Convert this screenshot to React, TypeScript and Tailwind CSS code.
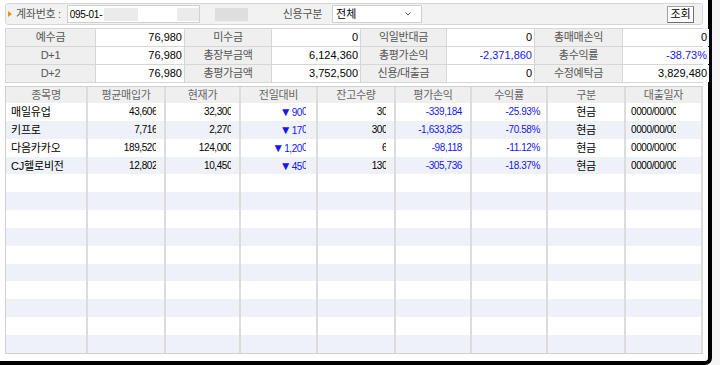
import clsx from 'clsx';

const summary = [
  [
    { label: '예수금', value: '76,980' },
    { label: '미수금', value: '0' },
    { label: '익일반대금', value: '0' },
    { label: '총매매손익', value: '0' },
  ],
  [
    { label: 'D+1', value: '76,980' },
    { label: '총장부금액', value: '6,124,360' },
    { label: '총평가손익', value: '-2,371,860', blue: true },
    { label: '총수익률', value: '-38.73%', blue: true },
  ],
  [
    { label: 'D+2', value: '76,980' },
    { label: '총평가금액', value: '3,752,500' },
    { label: '신용/대출금', value: '0' },
    { label: '수정예탁금', value: '3,829,480' },
  ],
];

const headers = ['종목명', '평균매입가', '현재가', '전일대비', '잔고수량', '평가손익', '수익률', '구분', '대출일자'];

const holdings = [
  { name: '매일유업', avg: '43,606', cur: '32,300', diff: '900', qty: '30', pl: '-339,184', rate: '-25.93%' },
  { name: '키프로', avg: '7,716', cur: '2,270', diff: '170', qty: '300', pl: '-1,633,825', rate: '-70.58%' },
  { name: '다음카카오', avg: '189,520', cur: '124,000', diff: '1,200', qty: '6', pl: '-98,118', rate: '-11.12%' },
  { name: 'CJ헬로비전', avg: '12,802', cur: '10,450', diff: '450', qty: '130', pl: '-305,736', rate: '-18.37%' },
];

const cols = 'grid grid-cols-[82px_78px_75px_77px_78px_76px_76px_78px_77px]';
const cell = 'border-r-2 border-[#dcdcdc] overflow-hidden whitespace-nowrap';

// the original grid cuts off the last glyph of most values
function Clip({ text }: { text: string }) {
  return (
    <>
      {text.slice(0, -1)}
      <span className="inline-block w-[4px] overflow-hidden align-top">{text.slice(-1)}</span>
    </>
  );
}

export default function App() {
  const rows = Array.from({ length: 14 }, (_, i) => holdings[i]);

  return (
    <div className="w-[720px] h-[365px] overflow-hidden bg-[#f4f4f4] font-['Liberation_Sans','Noto_Sans_CJK_KR',sans-serif] text-[11px] text-black">
      <div className="w-[712px] h-[365px] bg-white border-r-4 border-b-4 border-black rounded-br-[7px] pt-[3px] pl-[5px]">
        {/* search bar */}
        <div className="w-[698px] h-[22px] bg-[#f2f2f2] border border-[#d6d6d6] rounded-[3px] flex items-center">
          <svg width="4" height="6" viewBox="0 0 4 6" className="ml-[2px] mr-[4px]">
            <path d="M0 0L4 3L0 6Z" fill="#f0900a" />
          </svg>
          <span className="text-[#555] text-[11px] tracking-[-0.3px]">계좌번호 :</span>
          <div className="ml-[6px] w-[133px] h-[18px] bg-white border border-[#cfcfcf] flex items-center">
            <span className="pl-[2px] text-[10px] tracking-[-0.3px]">095-01-</span>
            <div className="ml-[2px] w-[34px] h-[13px] bg-[#ebebeb]" />
            <div className="ml-auto w-[22px] h-[13px] bg-[#ebebeb]" />
          </div>
          <div className="ml-[15px] w-[33px] h-[13px] bg-[#dedede]" />
          <span className="ml-[35px] text-[#555] tracking-[-0.3px]">신용구분</span>
          <div className="ml-[10px] w-[90px] h-[18px] bg-white border border-[#cfcfcf] flex items-center px-[3px]">
            <span className="text-[11px]">전체</span>
            <svg width="6" height="4" viewBox="0 0 6 4" className="ml-auto mr-[7px]">
              <path d="M0.5 0.5L3 3L5.5 0.5" fill="none" stroke="#555" strokeWidth="1" />
            </svg>
          </div>
          <button className="ml-auto mr-[8px] w-[27px] h-[17px] bg-white border border-[#a0a0a0] border-r-[#707070] border-b-[#707070] text-[11px] leading-none">
            조회
          </button>
        </div>

        {/* summary */}
        <div className="mt-[3px] w-[698px] grid grid-cols-[89px_88px_86px_88px_85px_87px_87px_86px] gap-px bg-[#d6d6d6] border border-[#d6d6d6]">
          {summary.flatMap((row, r) =>
            row.flatMap((c, i) => [
              <div key={`l${r}${i}`} className="h-[17px] bg-[#efefef] text-[#555] text-center leading-[17px] tracking-[-0.3px]">
                {c.label}
              </div>,
              <div
                key={`v${r}${i}`}
                className={clsx('h-[17px] bg-white text-right pr-[2px] leading-[17px]', c.blue && 'text-[#1515f0]')}
              >
                {c.value}
              </div>,
            ])
          )}
        </div>

        {/* holdings */}
        <div className="mt-[3px] w-[698px] border border-[#d0d0d0] border-r-0">
          <div className={clsx(cols, 'h-[16px] bg-[#efefef] text-[#666] text-center leading-[16px] tracking-[-0.3px]')}>
            {headers.map((h) => (
              <div key={h} className={cell}>
                {h}
              </div>
            ))}
          </div>
          {rows.map((h, i) => (
            <div key={i} className={clsx(cols, 'h-[17.85px] leading-[18px] text-[10px] tracking-[-0.4px]', i % 2 ? 'bg-[#eef2f8]' : 'bg-white')}>
              <div className={clsx(cell, 'pl-[5px] text-[11px] tracking-[-0.2px]')}>{h?.name}</div>
              <div className={clsx(cell, 'text-right pr-[8px]')}>{h && <Clip text={h.avg} />}</div>
              <div className={clsx(cell, 'text-right pr-[8px]')}>{h && <Clip text={h.cur} />}</div>
              <div className={clsx(cell, 'text-right pr-[10px] text-[#1515f0]')}>
                {h && (
                  <>
                    <span className="text-[12px] tracking-normal">▼</span>
                    <Clip text={h.diff} />
                  </>
                )}
              </div>
              <div className={clsx(cell, 'text-right pr-[8px]')}>{h && <Clip text={h.qty} />}</div>
              <div className={clsx(cell, 'text-right pr-[8px] text-[#1515f0]')}>{h?.pl}</div>
              <div className={clsx(cell, 'text-right pr-[6px] text-[#1515f0]')}>{h?.rate}</div>
              <div className={clsx(cell, 'text-center text-[11px]')}>{h && '현금'}</div>
              <div className={clsx(cell, 'pl-[5px]')}>{h && <Clip text="0000/00/00" />}</div>
            </div>
          ))}
        </div>
      </div>
    </div>
  );
}
